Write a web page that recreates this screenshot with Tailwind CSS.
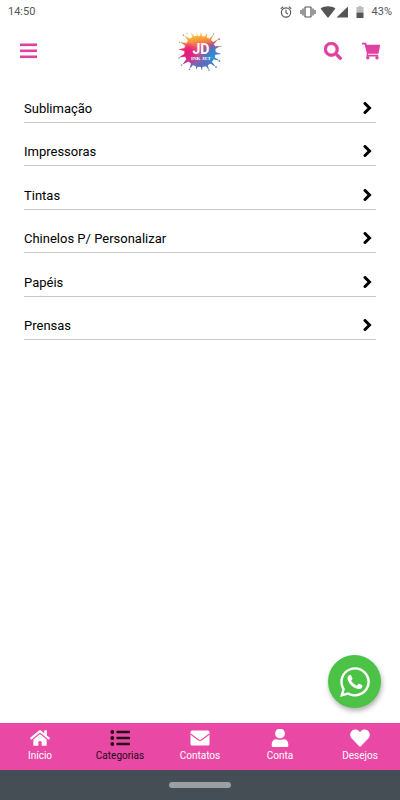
<!DOCTYPE html>
<html lang="pt-BR">
<head>
<meta charset="utf-8">
<meta name="viewport" content="width=device-width, initial-scale=1">
<title>Categorias</title>
<script src="https://cdn.jsdelivr.net/npm/@tailwindcss/browser@4"></script>
</head>
<body class="flex min-h-screen flex-col bg-white font-[Roboto,sans-serif] text-black">

<div class="flex h-6 items-center justify-between pl-2 pr-2 text-[#555]">
  <span class="text-[11px] leading-4">14:50</span>
  <div class="flex items-center">
    <svg class="mr-2 size-3" viewBox="0 0 24 24" fill="none" stroke="currentColor" stroke-width="2.200"><circle cx="12" cy="13" r="9.3"/><path d="M12 7.500V13.500l4 2.500M1.500 5.500 6.500 1.300M22.500 5.500 17.500 1.300"/></svg>
    <svg class="mr-1 h-3 w-4" viewBox="0 0 32 24" fill="none" stroke="currentColor" stroke-width="2.400"><rect x="10" y="2" width="12" height="20" rx="1"/><path d="M6 5v14M2 8v8M26 5v14M30 8v8"/></svg>
    <svg class="h-3 w-4" viewBox="0 0 32 24" fill="currentColor"><path d="M1 5C9-1 23-1 31 5L16 24z"/></svg>
    <svg class="mr-2 h-3 w-3" viewBox="0 0 24 24" fill="currentColor"><path d="M24 1v22H1z"/></svg>
    <svg class="mr-2 h-3 w-2" viewBox="0 0 16 24"><path d="M5 0h6v2h4v11H1V2h4z" fill="#bbb"/><path d="M1 13h14v11H1z" fill="#555"/></svg>
    <span class="text-[11px] leading-4">43%</span>
  </div>
</div>

<header class="mb-0.5 grid h-[53px] grid-cols-3 items-center px-5 text-[#e0409f]">
  <button type="button" aria-label="Menu" class="justify-self-start">
    <svg class="h-4 w-[17px]" viewBox="0 0 17 16" fill="currentColor"><rect y=".5" width="17" height="2.600"/><rect y="6.500" width="17" height="2.600"/><rect y="12.500" width="17" height="2.600"/></svg>
  </button>
  <a href="#" aria-label="JD Ink Jet" class="justify-self-center">
    <svg class="h-10 w-11" viewBox="0 0 88 80">
      <defs>
        <linearGradient id="ink" x1="0.4" y1="0" x2="0.6" y2="1">
          <stop offset="0" stop-color="#ffd23c"/><stop offset=".24" stop-color="#f7933c"/><stop offset=".42" stop-color="#ea4a70"/><stop offset=".65" stop-color="#a854a5"/><stop offset="1" stop-color="#2f7fc8"/>
        </linearGradient>
        <radialGradient id="blue" gradientUnits="userSpaceOnUse" cx="76" cy="54" r="34"><stop offset="0" stop-color="#1c9be0"/><stop offset=".5" stop-color="#3d80c8" stop-opacity=".85"/><stop offset="1" stop-color="#6d5db5" stop-opacity="0"/></radialGradient>
        <radialGradient id="pink" gradientUnits="userSpaceOnUse" cx="14" cy="46" r="26"><stop offset="0" stop-color="#e8187f"/><stop offset="1" stop-color="#e8187f" stop-opacity="0"/></radialGradient>
        <g id="splat">
          <ellipse cx="45" cy="41" rx="30" ry="31"/>
          <path d="M44 11 46 1 48 11 53 12 59 4 57 13 62 16 71 7 66 18 70 22 81 16 72 26 73 31 85 30 74 36 74 42 86 46 74 47 72 52 82 59 70 56 67 61 75 71 63 64 59 67 62 78 55 69 49 70 48 80 45 70 40 70 36 78 36 69 31 67 23 76 26 64 21 61 9 67 17 56 14 51 2 53 13 46 13 40 1 37 13 34 14 29 4 22 17 24 20 19 12 9 24 15 29 12 25 3 33 11 38 10 37 3 40 10z"/>
          <circle cx="71" cy="6" r="1.500"/><circle cx="82" cy="16" r="1.800"/><circle cx="86" cy="30" r="1.200"/><circle cx="83" cy="60" r="1.600"/><circle cx="76" cy="72" r="1.600"/><circle cx="23" cy="77" r="1.600"/><circle cx="7" cy="68" r="1.600"/><circle cx="2" cy="54" r="1.200"/><circle cx="3" cy="22" r="1.200"/><circle cx="11" cy="8" r="1.600"/><circle cx="18" cy="4" r="1.200"/><circle cx="62" cy="78" r="1.400"/>
        </g>
      </defs>
      <use href="#splat" fill="url(#ink)"/><use href="#splat" fill="url(#pink)"/><use href="#splat" fill="url(#blue)"/>
      <text x="46" y="45" text-anchor="middle" font-family="Roboto, sans-serif" font-weight="700" font-size="28" fill="#fff">JD</text>
      <text x="46" y="58" text-anchor="middle" font-family="Liberation Serif, serif" font-weight="700" font-size="10" fill="#fff">INK JET</text>
    </svg>
  </a>
  <div class="flex items-center gap-5 justify-self-end">
    <button type="button" aria-label="Buscar">
      <svg class="size-[18px]" viewBox="0 0 512 512" fill="currentColor" stroke="currentColor" stroke-width="12"><path d="M505 442.700 405.300 343c-4.500-4.500-10.600-7-17-7H372c27.600-35.300 44-79.700 44-128C416 93.100 322.900 0 208 0S0 93.100 0 208s93.100 208 208 208c48.300 0 92.700-16.400 128-44v16.300c0 6.400 2.500 12.500 7 17l99.700 99.700c9.400 9.400 24.600 9.400 33.900 0l28.300-28.300c9.400-9.400 9.400-24.600.1-34zM208 336c-70.700 0-128-57.200-128-128 0-70.700 57.200-128 128-128 70.700 0 128 57.200 128 128 0 70.700-57.200 128-128 128z"/></svg>
    </button>
    <button type="button" aria-label="Carrinho">
      <svg class="size-[18px]" viewBox="0 0 18 18" fill="currentColor"><path d="M0 .8h4l.8 2H18.300l-1.900 9H6.300l-.4.900H16.200v1.700H4.500L4.800 11 2.600 2.500H0z"/><circle cx="5.800" cy="15.800" r="1.700"/><circle cx="15" cy="15.800" r="1.700"/></svg>
    </button>
  </div>
</header>

<svg class="hidden">
  <symbol id="chevron" viewBox="0 0 9 12"><path d="M2 1.500 6.500 6 2 10.500" fill="none" stroke="currentColor" stroke-width="3" stroke-linecap="round" stroke-linejoin="miter"/></symbol>
</svg>

<main class="flex-1 px-6">
  <ul class="grid h-[261px] auto-rows-fr text-[13px] leading-4">
    <li><a href="#" class="flex h-full items-end justify-between border-b border-[#c8c8c8] pb-[5px] pr-1"><span>Sublimação</span><svg class="mb-[3px] h-3 w-[9px]"><use href="#chevron"/></svg></a></li>
    <li><a href="#" class="flex h-full items-end justify-between border-b border-[#c8c8c8] pb-[5px] pr-1"><span>Impressoras</span><svg class="mb-[3px] h-3 w-[9px]"><use href="#chevron"/></svg></a></li>
    <li><a href="#" class="flex h-full items-end justify-between border-b border-[#c8c8c8] pb-[5px] pr-1"><span>Tintas</span><svg class="mb-[3px] h-3 w-[9px]"><use href="#chevron"/></svg></a></li>
    <li><a href="#" class="flex h-full items-end justify-between border-b border-[#c8c8c8] pb-[5px] pr-1"><span>Chinelos P/ Personalizar</span><svg class="mb-[3px] h-3 w-[9px]"><use href="#chevron"/></svg></a></li>
    <li><a href="#" class="flex h-full items-end justify-between border-b border-[#c8c8c8] pb-[5px] pr-1"><span>Papéis</span><svg class="mb-[3px] h-3 w-[9px]"><use href="#chevron"/></svg></a></li>
    <li><a href="#" class="flex h-full items-end justify-between border-b border-[#c8c8c8] pb-[5px] pr-1"><span>Prensas</span><svg class="mb-[3px] h-3 w-[9px]"><use href="#chevron"/></svg></a></li>
  </ul>
</main>

<div class="sticky bottom-0">
  <a href="#" aria-label="WhatsApp" class="absolute right-[19px] bottom-[92px] flex size-[53px] items-center justify-center rounded-full bg-[#4cc247] text-white shadow-[1px_3px_5px_rgba(0,0,0,0.3)]">
    <svg class="size-[34px]" viewBox="0 0 448 512" fill="currentColor"><path d="M380.900 97.100C339 55.100 283.200 32 223.900 32c-122.400 0-222 99.600-222 222 0 39.100 10.200 77.300 29.600 111L0 480l117.700-30.900c32.400 17.700 68.900 27 106.100 27h.1c122.300 0 224.100-99.600 224.100-222 0-59.300-25.200-115-67.100-157zm-157 341.600c-33.200 0-65.700-8.900-94-25.700l-6.700-4-69.800 18.300L72 359.200l-4.400-7c-18.500-29.400-28.200-63.300-28.200-98.200 0-101.700 82.800-184.500 184.600-184.500 49.300 0 95.600 19.200 130.400 54.100 34.800 34.900 56.200 81.200 56.100 130.500 0 101.800-84.900 184.600-186.600 184.600zm101.200-138.200c-5.500-2.800-32.800-16.200-37.900-18-5.100-1.900-8.800-2.800-12.500 2.800-3.700 5.600-14.300 18-17.600 21.800-3.200 3.700-6.500 4.200-12 1.400-32.600-16.300-54-29.100-75.500-66-5.700-9.800 5.700-9.100 16.300-30.300 1.800-3.700.9-6.900-.5-9.700-1.400-2.800-12.500-30.100-17.100-41.200-4.500-10.800-9.100-9.300-12.500-9.500-3.200-.2-6.900-.2-10.600-.2-3.700 0-9.700 1.400-14.800 6.900-5.100 5.600-19.400 19-19.400 46.300 0 27.300 19.900 53.700 22.600 57.400 2.800 3.700 39.100 59.700 94.800 83.800 35.200 15.200 49 16.500 66.600 13.900 10.700-1.600 32.800-13.400 37.400-26.400 4.600-13 4.600-24.100 3.200-26.400-1.300-2.500-5-3.900-10.500-6.600z"/></svg>
  </a>
  <nav class="grid h-[47px] grid-cols-5 bg-[#e949a5] text-[10px] leading-3 text-white">
    <a href="#" class="flex flex-col items-center gap-[3px] pt-1.5">
      <svg class="h-[18px] w-5" viewBox="0 0 576 512" fill="currentColor"><path d="M280.400 148.300 96 300.100V464a16 16 0 0 0 16 16l112-.3a16 16 0 0 0 16-16V368a16 16 0 0 1 16-16h64a16 16 0 0 1 16 16v95.600a16 16 0 0 0 16 16L464 480a16 16 0 0 0 16-16V300L295.700 148.300a12.200 12.200 0 0 0-15.300 0zM571.600 251.500 488 182.600V44a12 12 0 0 0-12-12h-56a12 12 0 0 0-12 12v72.600L318.500 43a48 48 0 0 0-61 0L4.300 251.500a12 12 0 0 0-1.600 16.900l25.500 31a12 12 0 0 0 16.900 1.600l235.200-193.700a12.200 12.200 0 0 1 15.300 0L530.900 301a12 12 0 0 0 16.900-1.600l25.500-31a12 12 0 0 0-1.700-16.900z"/></svg>
      <span>Início</span>
    </a>
    <a href="#" aria-current="page" class="flex flex-col items-center gap-[3px] pt-1.5 text-[#210a18]">
      <svg class="h-[18px] w-5" viewBox="0 0 20 18" fill="currentColor"><circle cx="2.300" cy="3" r="1.900"/><circle cx="2.300" cy="9" r="1.900"/><circle cx="2.300" cy="15" r="1.900"/><rect x="6.500" y="1.800" width="13.500" height="2.500" rx=".5"/><rect x="6.500" y="7.800" width="13.500" height="2.500" rx=".5"/><rect x="6.500" y="13.800" width="13.500" height="2.500" rx=".5"/></svg>
      <span>Categorias</span>
    </a>
    <a href="#" class="flex flex-col items-center gap-[3px] pt-1.5">
      <svg class="h-[18px] w-5" viewBox="0 0 20 18"><rect x=".5" y="1.500" width="19" height="15" rx="1.500" fill="#fff"/><path d="M.5 5 8.200 10.800Q10 12 11.800 10.800L19.500 5" fill="none" stroke="#e949a5" stroke-width="1.100"/></svg>
      <span>Contatos</span>
    </a>
    <a href="#" class="flex flex-col items-center gap-[3px] pt-1.5">
      <svg class="h-[18px] w-5" viewBox="0 0 20 18" fill="currentColor"><circle cx="10" cy="4.500" r="4.900"/><path d="M1.700 15.500c0-3.400 1.900-5.300 4.800-5.300 2.300 1 4.700 1 7 0 2.900 0 4.800 1.900 4.800 5.300v1c0 1-.7 1.500-1.600 1.500H3.300c-.9 0-1.600-.5-1.600-1.500z"/></svg>
      <span>Conta</span>
    </a>
    <a href="#" class="flex flex-col items-center gap-[3px] pt-1.5">
      <svg class="h-[18px] w-5" viewBox="0 20 512 472" fill="currentColor"><path d="M462.300 62.600C407.500 15.900 326 24.300 275.700 76.200L256 96.500l-19.700-20.300C186.100 24.300 104.500 15.900 49.700 62.600c-62.800 53.600-66.100 149.800-9.900 207.900l193.500 199.800c12.500 12.900 32.800 12.900 45.300 0l193.500-199.800c56.300-58.100 53-154.300-9.800-207.900z"/></svg>
      <span>Desejos</span>
    </a>
  </nav>
  <div class="flex h-[30px] items-center justify-center bg-[#454e54]"><div class="h-1.5 w-[62px] rounded-full bg-[#9b9fa2]"></div></div>
</div>
</body>
</html>
